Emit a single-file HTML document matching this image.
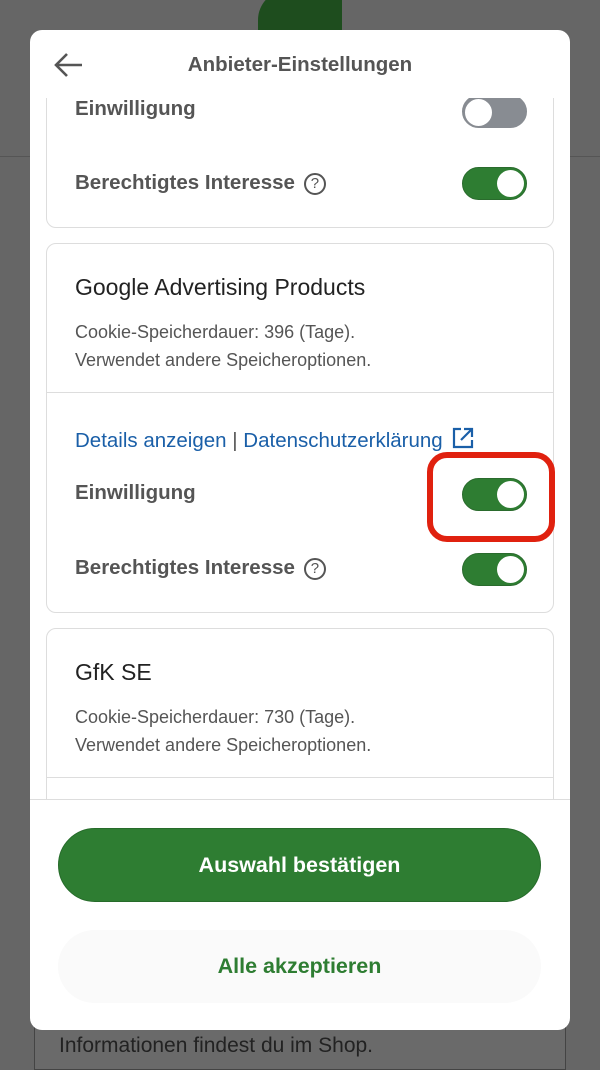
<!DOCTYPE html>
<html><head><meta charset="utf-8"><style>
*{box-sizing:border-box;margin:0;padding:0}
body{width:600px;height:1056px;background:#666;position:relative;overflow:hidden;font-family:"Liberation Sans",sans-serif}
.logo{position:absolute;left:258px;top:-10px;width:84px;height:50px;background:#1e4d1e;border-radius:30px 10px 4px 4px}
.bgline{position:absolute;left:0;top:156px;width:600px;height:1px;background:#555}
.bgbox{position:absolute;left:34px;top:1010px;width:532px;height:60px;border:1px solid #444;background:#6a6a6a}
.bgtext{position:absolute;left:59px;top:1034px;font-size:21px;color:#222}
.modal{position:absolute;left:30px;top:30px;width:540px;height:1000px;background:#fff;border-radius:12px;overflow:hidden}
.hdr{position:absolute;top:0;left:0;width:540px;height:68px}
.hdr h1{position:absolute;left:0;width:540px;text-align:center;top:23px;font-size:20.5px;font-weight:bold;color:#555}
.scroll{position:absolute;top:68px;left:0;width:540px;height:702px;overflow:hidden;border-bottom:1px solid #ddd}
.card{position:absolute;left:16px;width:508px;border:1px solid #ddd;border-radius:10px;background:#fff}
.lbl{position:absolute;left:28px;font-size:20.5px;font-weight:bold;color:#555}
.tg{position:absolute;left:415px;width:65px;height:33px;border-radius:17px;background:#2e7d32;border:1px solid #2a6b2d}
.tg::after{content:"";position:absolute;right:2px;top:2px;width:27px;height:27px;border-radius:50%;background:#fff}
.tg.off{background:#888c92;border-color:#888c92}
.tg.off::after{left:1px;right:auto;border:1px solid #888c92}
.q{display:inline-block;width:22px;height:22px;border:2px solid #555;border-radius:50%;font-size:15px;font-weight:normal;text-align:center;line-height:18px;margin-left:9px;vertical-align:1px}
.title{position:absolute;left:28px;font-size:23px;color:#222}
.desc{position:absolute;left:28px;font-size:18px;line-height:28px;color:#555}
.div{position:absolute;left:0;width:506px;height:1px;background:#ddd}
.link{position:absolute;left:28px;font-size:20.5px;color:#1a5fa8}
.b1{position:absolute;left:28px;top:798px;width:483px;height:74px;border-radius:37px;background:#2e7d32;color:#fff;font-size:21.5px;font-weight:bold;text-align:center;line-height:72px;border:1px solid #266b2a}
.b2{position:absolute;left:28px;top:900px;width:483px;height:73px;border-radius:37px;background:#fafafa;color:#2e7d32;font-size:21.5px;font-weight:bold;text-align:center;line-height:73px}
.hl{position:absolute;left:427px;top:452px;width:128px;height:90px;border:6px solid #e0210f;border-radius:20px}
</style></head><body>
<div class="logo"></div><div class="bgline"></div>
<div class="bgbox"></div><div class="bgtext">Informationen findest du im Shop.</div>
<div class="modal">
 <div class="hdr">
  <svg style="position:absolute;left:24px;top:22px" width="30" height="26" viewBox="0 0 30 26"><path d="M28 13H3M13 2L2 13l11 11" fill="none" stroke="#555" stroke-width="2.6"/></svg>
  <h1>Anbieter-Einstellungen</h1>
 </div>
 <div class="scroll">
  <div class="card" style="top:-40px;height:170px">
   <div class="lbl" style="top:38px">Einwilligung</div><div class="tg off" style="top:36px"></div>
   <div class="lbl" style="top:112px">Berechtigtes Interesse<span class="q">?</span></div><div class="tg" style="top:108px"></div>
  </div>
  <div class="card" style="top:145px;height:370px">
   <div class="title" style="top:30px">Google Advertising Products</div>
   <div class="desc" style="top:74px">Cookie-Speicherdauer: 396 (Tage).<br>Verwendet andere Speicheroptionen.</div>
   <div class="div" style="top:148px"></div>
   <div class="link" style="top:183px">Details anzeigen <span style="color:#555">|</span> Datenschutzerklärung <svg width="22" height="22" viewBox="0 0 22 22" style="vertical-align:-2px;margin-left:4px"><path d="M9 2H2v18h18v-7M12 2h8v8M20 2L9 13" fill="none" stroke="#1a5fa8" stroke-width="2.2"/></svg></div>
   <div class="lbl" style="top:237px">Einwilligung</div><div class="tg" style="top:234px"></div>
   <div class="lbl" style="top:312px">Berechtigtes Interesse<span class="q">?</span></div><div class="tg" style="top:309px"></div>
  </div>
  <div class="card" style="top:530px;height:260px">
   <div class="title" style="top:30px">GfK SE</div>
   <div class="desc" style="top:74px">Cookie-Speicherdauer: 730 (Tage).<br>Verwendet andere Speicheroptionen.</div>
   <div class="div" style="top:148px"></div>
  </div>
 </div>
 <div class="b1">Auswahl bestätigen</div>
 <div class="b2">Alle akzeptieren</div>
</div>
<div class="hl"></div>
</body></html>
